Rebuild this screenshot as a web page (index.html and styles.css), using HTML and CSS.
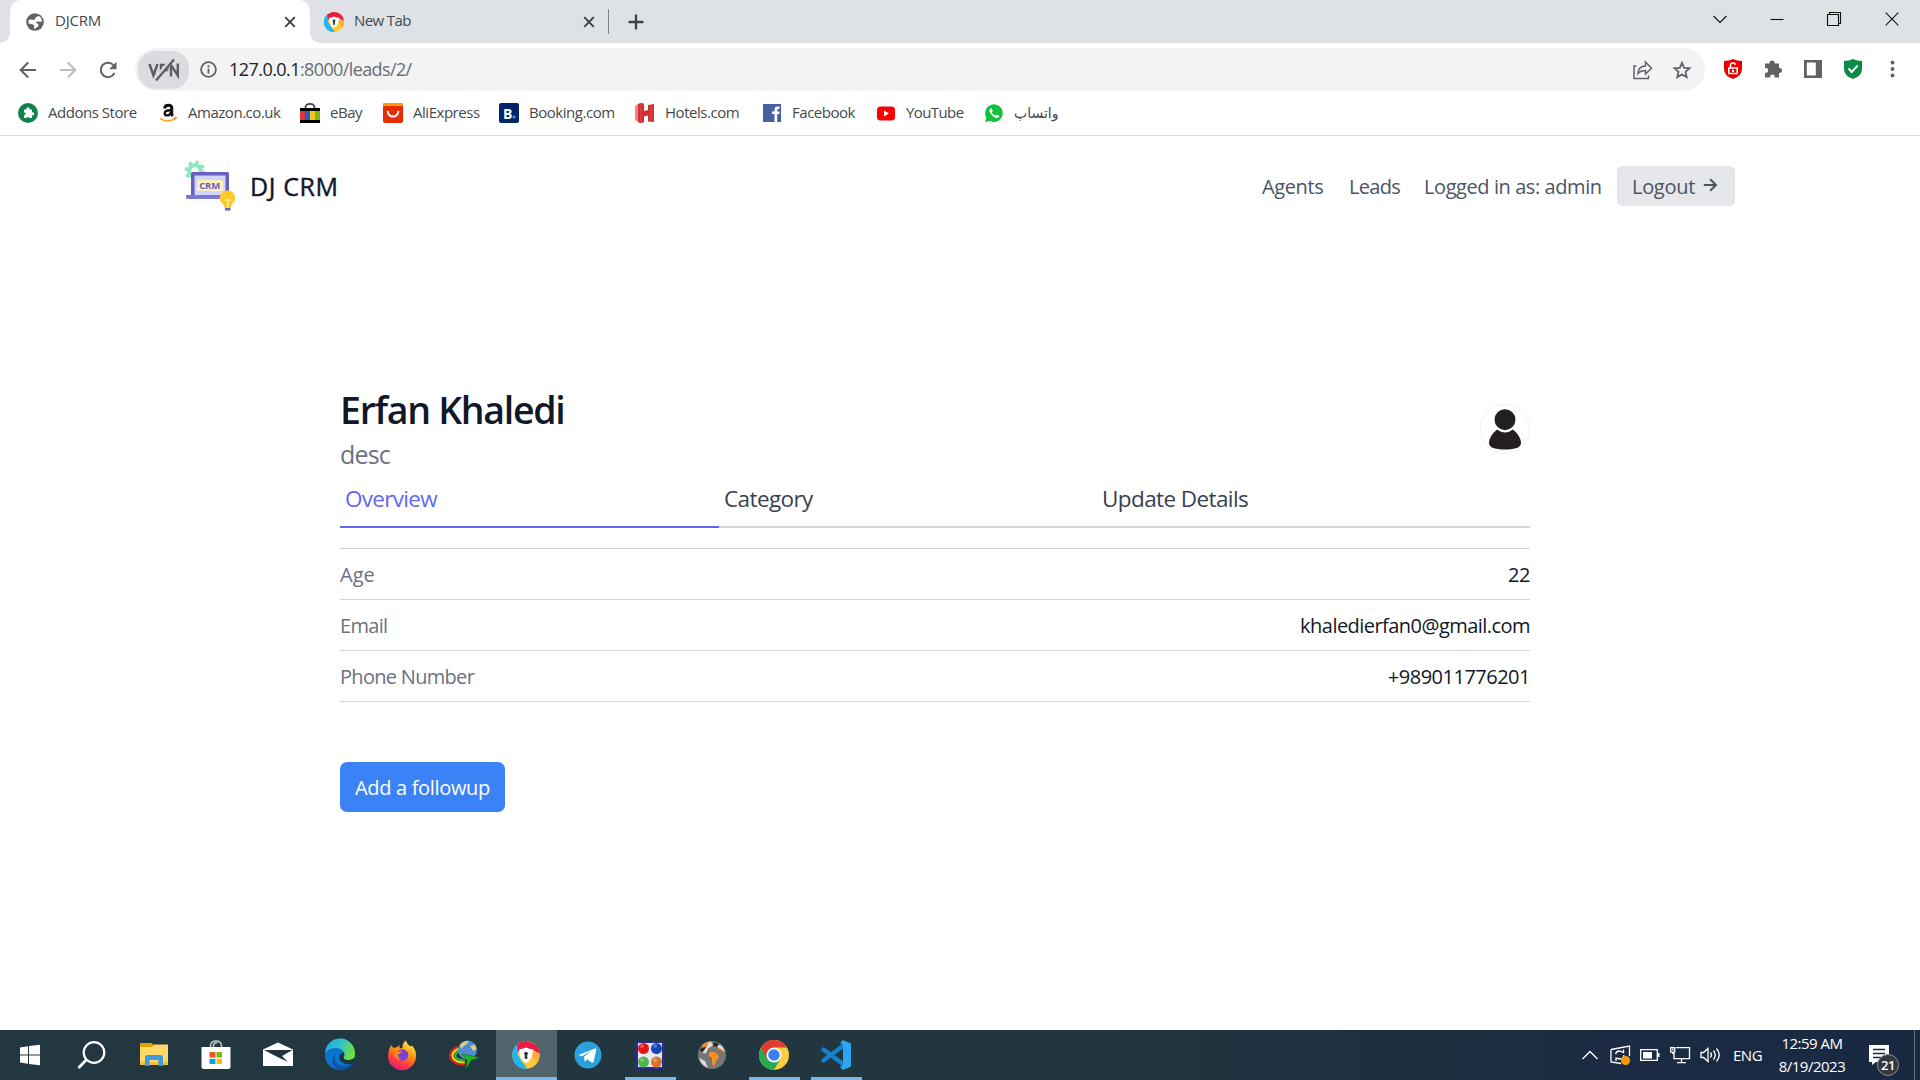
FILE: index.html
```html
<!DOCTYPE html>
<html lang="en">
<head>
<meta charset="utf-8">
<title>DJCRM</title>
<link rel="stylesheet" href="styles.css">
</head>
<body>
<div class="screen">
  <header class="browser">
    <div class="tabstrip">
      <div class="tab tab-active">
        <svg class="fav" viewBox="0 0 18 18"><circle cx="9" cy="9" r="8.800" fill="#5f6368"/><path d="M2.500 7.500Q4 6 5.500 6.500q2.500 1 3.500-.5 0-2 2.500-2.500l1-.8Q16 4.500 16 8q-1.500 1.500-3.500.500-2.500-.5-2.500 1.500 2.500 0 2.500 2 0 2-2 2.500L8.500 16Q8 16 8 14.500q1-2-1-3-2-.3-4.500-1z" fill="#fff"/></svg>
        <span class="tab-title t-djcrm">DJCRM</span>
        <svg class="x" viewBox="0 0 12 12"><path d="M1.200 1.200l9.600 9.600M10.800 1.200l-9.600 9.600"/></svg>
      </div>
      <div class="tab tab-second">
        <svg class="fav2" viewBox="0 0 20 20"><use href="#avast"/></svg>
        <span class="tab-title t-new">New Tab</span>
        <svg class="x" viewBox="0 0 12 12"><path d="M1.200 1.200l9.600 9.600M10.800 1.200l-9.600 9.600"/></svg>
      </div>
      <span class="tab-sep"></span>
      <svg class="plus" viewBox="0 0 16 16"><path d="M8 .5v15M.5 8h15"/></svg>
      <div class="winctl">
        <svg viewBox="0 0 14 14"><path d="M.5 4l6.500 6.500L13.500 4"/></svg>
        <svg viewBox="0 0 14 14"><path d="M.5 7.500h13"/></svg>
        <svg viewBox="0 0 14 14"><path d="M.5 2.500h11v11H.5zM2.500 2.500V.5h11v11h-2"/></svg>
        <svg viewBox="0 0 14 14"><path d="M.7 .7l12.600 12.600M13.300 .7L.7 13.300"/></svg>
      </div>
    </div>
    <div class="toolbar">
      <div class="navbtns">
        <svg viewBox="0 0 18 18"><path d="M17 9H2M9.200 1.500L1.700 9l7.500 7.500"/></svg>
        <svg class="dim" viewBox="0 0 18 18"><path d="M1 9h15M8.800 1.500L16.300 9l-7.500 7.500"/></svg>
        <svg viewBox="0 0 18 18"><path d="M15.500 12A7.200 7.200 0 1 1 14.600 4.400L16 6"/><path d="M17.500 .8v7.400h-7.400z" fill="#5f6368" stroke="none"/></svg>
      </div>
      <div class="omnibox">
        <div class="vpn"><svg viewBox="0 0 32 24"><g fill="none" stroke="#5b5e63" stroke-width="2.400"><path d="M1.500 6l4 11.500L9.500 6"/><path d="M13 17.500V7h4q3 .3 2.600 3.200t-4 3"/><path d="M23 18.500V7l6.800 10.500V5.500"/></g><path d="M7 22L24 2" stroke="#dadce0" stroke-width="5"/><path d="M8 22.500L26 1.500" stroke="#5b5e63" stroke-width="2.300"/></svg></div>
        <svg class="info" viewBox="0 0 17 17"><circle cx="8.500" cy="8.500" r="7.400" fill="none" stroke="#5f6368" stroke-width="1.800"/><path d="M8.500 7.500v5M8.500 4.200v2" stroke="#5f6368" stroke-width="1.900"/></svg>
        <span class="url"><b>127.0.0.1</b>:8000/leads/2/</span>
        <svg class="share" viewBox="0 0 20 20"><path d="M3.500 6H1v12.500h14.500V15.500M5 13.500c.3-5 3-7.500 7.500-7.500V2l6 6.200-6 5.800V10.500C9 10.500 7 11.200 5 13.500z" fill="none" stroke="#5f6368" stroke-width="1.500"/></svg>
        <svg class="star" viewBox="0 0 18 18"><path d="M9 1.800l2.200 5 5.400.5-4.100 3.600 1.200 5.300L9 13.400l-4.700 2.800 1.200-5.300L1.400 7.300l5.400-.5z" fill="none" stroke="#5f6368" stroke-width="1.800"/></svg>
      </div>
      <div class="ext">
        <svg viewBox="0 0 20 20"><path d="M10 0q4 2 9 2v8q0 7-9 10Q1 17 1 10V2q5 0 9-2z" fill="#e60000"/><path d="M5.800 9h8.400v5.500H5.800zM7.500 8.500V6.200q0-2.200 2.500-2.200 2.200 0 2.400 1.800" fill="none" stroke="#fff" stroke-width="1.500"/><path d="M9 10.800h2v2.200H9z" fill="#fff"/></svg>
        <svg viewBox="0 0 20 20"><path d="M2 4.500h4.500V4a2.600 2.600 0 0 1 5.200 0v.5H16V9h.6a2.500 2.500 0 0 1 0 5H16v4.500h-4.300v-.8a2.300 2.300 0 0 0-4.600 0v.8H2v-4.600h.8a2.400 2.400 0 0 0 0-4.800H2z" fill="#5f6368"/></svg>
        <svg viewBox="0 0 20 20"><path d="M1 1h18v18H1zM3.800 3.600v12.800h9V3.600z" fill="#5f6368" fill-rule="evenodd"/></svg>
        <svg viewBox="0 0 20 20"><path d="M10 0q4 2 9 2v8q0 7-9 10Q1 17 1 10V2q5 0 9-2z" fill="#0b8a4a"/><path d="M5.500 9.500l3.200 3.500 6-6.500" fill="none" stroke="#fff" stroke-width="1.900"/></svg>
        <svg viewBox="0 0 20 20"><g fill="#5f6368"><circle cx="9.500" cy="3.500" r="1.900"/><circle cx="9.500" cy="10" r="1.900"/><circle cx="9.500" cy="16.500" r="1.900"/></g></svg>
      </div>
    </div>
    <nav class="bookmarks">
      <a><svg viewBox="0 0 20 20"><circle cx="10" cy="10" r="10" fill="#12824c"/><path d="M6 6.500h2.500a1.600 1.600 0 1 1 3 0H14v2.800a1.600 1.600 0 1 1 0 3V15h-2.700a1.500 1.500 0 0 0-2.800 0H6v-2.700a1.500 1.500 0 0 0 0-3z" fill="#fff"/></svg><span>Addons Store</span></a>
      <a><svg viewBox="0 0 20 20"><path d="M6.500 5.500Q7 2.300 10.500 2.300q3.300 0 3.300 3.200v5.500q0 1 1 2" fill="none" stroke="#111" stroke-width="2.900"/><path d="M13 7.200q-6.300-.2-6.300 3 0 2.200 2.300 2.200 3.300 0 4-3.500" fill="none" stroke="#111" stroke-width="2.400"/><path d="M2 15.500q7.500 4.500 15 .2M15.500 14.600l2.500.2-1.200 2.400" fill="none" stroke="#f5a623" stroke-width="1.700"/></svg><span class="s-amz">Amazon.co.uk</span></a>
      <a><svg viewBox="0 0 20 20"><path d="M5.500 7V4Q6 .8 10 .8t4.500 3.200v3" fill="none" stroke="#444" stroke-width="1.700"/><path d="M0 5h20v15H0z" fill="#000"/><path d="M0 8h5v9H0z" fill="#e53238"/><path d="M5 8h5v9H5z" fill="#1a5fd0"/><path d="M10 8h5v9h-5z" fill="#f5c518"/><path d="M15 8h5v9h-5z" fill="#7cb518"/></svg><span>eBay</span></a>
      <a><svg viewBox="0 0 20 20"><rect width="20" height="20" rx="2" fill="#e62e04"/><path d="M0 3V2q0-2 2-2h16q2 0 2 2v1z" fill="#ff9900"/><path d="M4.500 8q1 5.500 5.500 5.500T15.500 8" fill="none" stroke="#fff" stroke-width="1.900"/></svg><span>AliExpress</span></a>
      <a><svg viewBox="0 0 20 20"><rect width="20" height="20" rx="2" fill="#04246a"/><text x="4" y="15.500" class="bk">B</text><circle cx="15" cy="14" r="1.500" fill="#1ba3e8"/></svg><span>Booking.com</span></a>
      <a><svg viewBox="0 0 20 20"><path d="M0 3l3-2v18l-3-2z" fill="#ef8585"/><path d="M3 1q4-2 6 0v7l4-1V2l6-1v18l-6-.5v-6l-4 1V19q-3 2-6 0z" fill="#d32f2f"/><path d="M6 1v18M16 2v17" stroke="#e04b4b"/></svg><span class="s-hot">Hotels.com</span></a>
      <a><svg viewBox="0 0 20 20"><path d="M1 1h18v18H1z" fill="#4560a0"/><path d="M12.500 19v-8H10V8.500h2.500V6.500q0-3 3-3h2V6h-1.300q-1 0-1 1v1.500h2.500L17.300 11h-2.100v8z" fill="#fff"/></svg><span>Facebook</span></a>
      <a><svg viewBox="0 0 20 20"><rect x="1" y="3.500" width="18" height="14" rx="3.500" fill="#f00"/><path d="M8 7.500v6l5-3z" fill="#fff"/></svg><span class="s-yt">YouTube</span></a>
      <a><svg viewBox="0 0 20 20"><path d="M1 19l1.300-4.500A8.800 8.800 0 1 1 6 18z" fill="#14c13c"/><path d="M6.500 5.500Q4.500 7 6.300 10q2 3.500 5.500 5 3 .5 3.700-2l-2.700-1.500-1.500 1.300Q9 11.800 7.800 9.500l1-1.200-1-2.700z" fill="#fff"/></svg><span class="ar">واتساپ</span></a>
    </nav>
  </header>

  <main class="page">
    <header class="site">
      <svg class="logo" viewBox="0 0 51 51">
        <g fill="#8ee8bd"><circle cx="10" cy="11" r="8"/><circle cx="10" cy="11" r="8.800" fill="none" stroke="#8ee8bd" stroke-width="3.200" stroke-dasharray="3.500 3.410"/></g><circle cx="10" cy="11" r="3.800" fill="#fff"/>
        <path d="M21 5h22M43 5v7M10 37v8M10 42h34" stroke="#dfe6f5" stroke-dasharray="1 3.200" fill="none"/>
        <rect x="6" y="12" width="38" height="25" rx="1.500" fill="#6a5fc0"/><path d="M9.500 15.500h31V35h-31z" fill="#cfd7ff"/><rect x="12" y="20" width="26" height="11" rx="2" fill="#fdf0b8"/>
        <text x="14.200" y="28.800" class="lg" textLength="21">CRM</text>
        <path d="M1 35h42v2.500q0 1.500-2 1.500H3q-2 0-2-1.500z" fill="#7d78d8"/>
        <path d="M42.500 30.500a7.300 7.300 0 0 1 4.800 13Q46 45.500 46 48h-6.500q0-2.500-2-4.500a7.300 7.300 0 0 1 5-13z" fill="#ffca28"/><path d="M40 40h5.500M42.700 40v8" stroke="#fff3c0" stroke-width="1.400"/><path d="M40 48h5.500v2.500H40z" fill="#6a5fc0"/>
      </svg>
      <span class="brand">DJ CRM</span>
      <nav class="sitenav">
        <a class="n1">Agents</a><a class="n2">Leads</a><a class="n3">Logged in as: admin</a>
      </nav>
      <a class="logout"><span>Logout</span><svg viewBox="0 0 14 14"><path d="M.8 7h12M7.200 1.200L13 7l-5.800 5.800"/></svg></a>
    </header>

    <section class="lead">
      <div class="lead-head">
        <div>
          <h1>Erfan Khaledi</h1>
          <h2>desc</h2>
        </div>
        <svg class="avatar" viewBox="0 0 50 50"><circle cx="25" cy="25" r="24.500" fill="#fff" stroke="#f1f1f1"/><path d="M17 25.500q8 6 16 0 7.800 6.500 8 13.500 0 6.500-16 6.500T9 39q.2-7 8-13.500z" fill="#231f20"/><circle cx="25" cy="15.700" r="11.200" fill="#231f20" stroke="#fff" stroke-width="1.500"/></svg>
      </div>
      <div class="tabs">
        <a class="on">Overview</a><a>Category</a><a class="last">Update Details</a>
      </div>
      <dl>
        <div><dt class="r1">Age</dt><dd>22</dd></div>
        <div><dt>Email</dt><dd class="v2">khaledierfan0@gmail.com</dd></div>
        <div><dt>Phone Number</dt><dd class="v3">+989011776201</dd></div>
      </dl>
      <a class="followup">Add a followup</a>
    </section>
  </main>

  <footer class="taskbar">
    <div class="apps">
      <div class="app"><svg viewBox="0 0 30 30"><path d="M5 7.500l8-1.200V14.500H5zM14 6.100L25 4.800V14.500H14zM5 15.500h8v8.300L5 22.600zM14 15.500h11v9.800L14 23.900z" fill="#fff"/></svg></div>
      <div class="app"><svg viewBox="0 0 30 30"><circle cx="17" cy="12.500" r="10.300" fill="none" stroke="#fff" stroke-width="2.200"/><path d="M9.500 19.500L1.500 28" stroke="#fff" stroke-width="2.800"/></svg></div>
      <div class="app"><svg viewBox="0 0 30 30"><path d="M1 3h12l2 3-2 3H1z" fill="#e0a100"/><path d="M1 7h12l2-2.500h14V25H1z" fill="#ffd868"/><path d="M1 22h28v3H1z" fill="#f5bf3c"/><path d="M6 26V17.500Q6 15 8.500 15h13q2.500 0 2.500 2.500V26h-4.500v-6h-9v6z" fill="#3f9be0"/></svg></div>
      <div class="app"><svg viewBox="0 0 30 30"><path d="M9.500 8V5.500Q10 1 15 1t5.500 4.500V8M12.500 8V5q.5-2.500 4-2.500" fill="none" stroke="#bcc5c8" stroke-width="1.500"/><path d="M.5 7h29v20q0 2-2 2h-25q-2 0-2-2z" fill="#fff"/><path d="M8.500 12h6v5.500h-6z" fill="#f25022"/><path d="M15.500 12h5.500v5.500h-5.500z" fill="#7fba00"/><path d="M8.500 18.800h6V24h-6z" fill="#00a4ef"/><path d="M15.500 18.800h5.500V24h-5.500z" fill="#ffb900"/></svg></div>
      <div class="app"><svg viewBox="0 0 30 30"><path d="M0 9.500L15 2.500l15 7V26H0z" fill="#fff"/><path d="M1 10h28.500l-10.500 6 6 6L12.500 16z" fill="#20343c"/></svg></div>
      <div class="app"><svg viewBox="0 0 30 30"><defs><linearGradient id="eg" x1="0" x2="1" y2=".3"><stop stop-color="#1f9fe0"/><stop offset=".6" stop-color="#35c6c5"/><stop offset="1" stop-color="#6bdf3c"/></linearGradient></defs><circle cx="15" cy="15" r="15" fill="#0b75d0"/><path d="M0 13A15 15 0 0 1 30 14q0 6-6.500 6-5 0-5-2.500l1-2.500Q19 9 12 8 4 7.500 0 13z" fill="url(#eg)"/><path d="M12 12q-4 5-.5 10.500t16.500 1.500A15 15 0 0 1 13 29.800Q2 22 12 12z" fill="#0c56a4"/><path d="M19 12.500q1 2.500-.5 5 .5 3 6 2.500 3-.3 5.300-2.500-1.500 5-2.500 6.500-7 1-10.500-2t-2-7q1.500-3 4.200-2.500z" fill="#20343c"/></svg></div>
      <div class="app"><svg viewBox="0 0 30 30"><defs><linearGradient id="ff" x1=".8" y1="0" x2=".3" y2="1"><stop stop-color="#fff44f"/><stop offset=".4" stop-color="#ff980e"/><stop offset=".75" stop-color="#ff3647"/><stop offset="1" stop-color="#e31587"/></linearGradient></defs><path d="M4 5l2.500 3 4-1 2-2v3.500l3-.5Q15 3 19 .500q1 4 5 6l1-1q4.500 5 4 11A14 14 0 0 1 1 16Q1 10 4 5z" fill="url(#ff)"/><circle cx="15.500" cy="15" r="5.800" fill="#7b3fd6"/><path d="M7 11q4 1 8 0-1 3-4 3.500-.5 3 3 5-6 0-7-4.500z" fill="#ff8a16"/></svg></div>
      <div class="app"><svg viewBox="0 0 30 30"><g fill="none" stroke-width="2.200"><path d="M9 6.500Q-1 11 1.500 18T16 24.500" stroke="#d81e1e"/><path d="M10 8.500Q1.500 12.500 3.800 17.500t12 5" stroke="#f6d51f"/><path d="M10 11q-5 3-3.500 6t9.500 3.500" stroke="#36b12d"/></g><circle cx="18.500" cy="10" r="9.500" fill="#4f8ad6"/><path d="M11 4.500q4-4 9-3.800l-2 3.300-3 2-3 3zM21 6l5-1.500 1.500 4-3 3z" fill="#d8cf76"/><path d="M13 14l17 3.500-8 3-5 8.500 1-9z" fill="#1fb51b" stroke="#087208" stroke-width=".6"/></svg></div>
      <div class="app focus"><svg viewBox="-1 -1 22 22"><g id="avast"><circle cx="10" cy="10" r="10" fill="#ffc93c"/><path d="M10 0Q3 1 2 7l3 5 4 8A10 10 0 0 1 3.500 2.500z" fill="#1fb6f5"/><path d="M0 10A10 10 0 0 0 11 20L7 15 4 10 4 2Q0 5 0 10z" fill="#1fb6f5"/><path d="M3.500 2.500A10 10 0 0 1 20 9l-6-3-6 0q-3 .3-4 2z" fill="#ec1846"/><path d="M14 5.500L20 9q.3 4-2 7l-3-5z" fill="#ffab40"/><path d="M10 4.500q2.500 1.300 5 1.300Q15.300 13 10 16 4.700 13 5 5.800q2.500 0 5-1.300z" fill="#fff"/><circle cx="10" cy="9" r="1.400" fill="#333"/><path d="M9.300 9.500h1.400l.4 3.200H8.900z" fill="#333"/></g></svg></div>
      <div class="app"><svg viewBox="0 0 30 30"><circle cx="15" cy="15" r="13.500" fill="#2ba0da"/><path d="M5.500 15L22 8.500q1.500-.3 1.300 1.200L20.500 22q-.5 1.300-1.800.5l-4.500-3.300-2.500 2.500-.8-5 8.500-6.500-10.500 6z" fill="#fff"/></svg></div>
      <div class="app run"><svg viewBox="0 0 30 30"><rect x="1" y="1" width="28" height="28" rx="2" fill="#2a2a9a"/><path d="M3 3h24v24H3z" fill="#e8e8ee"/><circle cx="8.500" cy="8.500" r="5.500" fill="#e01818"/><circle cx="21.500" cy="8.500" r="5.500" fill="#1546b8"/><circle cx="8.500" cy="22" r="5.500" fill="#4fb54f"/><circle cx="21.500" cy="22" r="5.500" fill="#d9762e"/><g fill="#fff" opacity=".25"><circle cx="7" cy="6" r="2"/><circle cx="20" cy="6" r="2"/><circle cx="7" cy="20" r="2"/><circle cx="20" cy="20" r="2"/></g></svg></div>
      <div class="app"><svg viewBox="0 0 30 30"><circle cx="15" cy="15" r="14" fill="#777"/><path d="M4 8Q8 2 14 1.500l2 4-5 3-2 5-5-1zM18 3l7 3 3 6-6-3zM2 18l6 3 3 7Q4 25 2 18z" fill="#ddd"/><path d="M3 10q3-6 8-6l-3 5-3 4zM17 2l5 2-2 3-4-1z" fill="#2d2925"/><path d="M5 5q3-3 7-3l-2 4-4 2zM12 13q4-3 8 1l2 3-3 4-2 6-2-4v-5l-3-2z" fill="#f5921e"/><path d="M20 8l4 1 2 3-3 1z" fill="#c8671a"/></svg></div>
      <div class="app run"><svg viewBox="0 0 30 30"><circle cx="15" cy="15" r="15" fill="#ffcd40"/><path d="M15 15L2 7.500A15 15 0 0 0 15 30l6.500-11.300z" fill="#2da94f"/><path d="M2 7.500A15 15 0 0 1 28 7.500H15L8.500 18.700z" fill="#e33b2e"/><circle cx="15" cy="15" r="7.500" fill="#fff"/><circle cx="15" cy="15" r="5.800" fill="#3b82f0"/></svg></div>
      <div class="app run"><svg viewBox="0 0 30 30"><path d="M2.500 9.500L24 25.500M2.500 20.500L24 4.500" stroke="#1681cc" stroke-width="4.300" stroke-linecap="round"/><path d="M22 0l8 3.500v23L22 30l-3-3 3-2V5l-3-2z" fill="#2aa7f0"/></svg></div>
    </div>
    <div class="tray">
      <svg class="i-up" viewBox="0 0 16 20"><path d="M.5 14L8 6.500 15.500 14"/></svg>
      <svg class="i-upd" viewBox="0 0 20 20"><path d="M1 4.500L19.500 1v10M1 4.500V17l10 1.500"/><path d="M5.500 9q1-3 4-3l4 1.500V4.500M14 10q-.5 4-4 4l-4-1v3"/><circle cx="15.500" cy="15.500" r="4.600" fill="#ff9800" stroke="none"/></svg>
      <svg class="i-bat" viewBox="0 0 20 20"><path d="M.7 4.700h16.600v10.600H.7z"/><path d="M18.500 8v4" stroke-width="2"/><path d="M3 7h9v6.500H3z" fill="#fff" stroke="none"/></svg>
      <svg class="i-net" viewBox="0 0 20 20"><path d="M6 2.700h13.500v11H4V8M11.500 14v3.500M7 17.700h9M.7 2.700h4v4.500h-4zM2.700 7v2M2 4.500h1.500"/></svg>
      <svg class="i-vol" viewBox="0 0 20 20"><path d="M1 7.500h2.500L8 3.500v13L3.500 12.500H1zM10.500 7.500q2 2.500 0 5M13.500 5.500q3.500 4.500 0 9M16.500 3.500q5.500 6.500 0 13"/></svg>
      <span class="lang">ENG</span>
      <div class="clock"><span>12:59 AM</span><span class="date">8/19/2023</span></div>
      <div class="notif"><svg viewBox="0 0 20 20"><path d="M0 0h20v17H7l-4 3v-3H0z" fill="#fff"/><path d="M4 4.500h12M4 8.500h12M4 12.500h8" stroke="#1b2b42" stroke-width="1.300"/></svg><span class="badge">21</span></div>
      <span class="peek"></span>
    </div>
  </footer>
</div>
</body>
</html>
```
FILE: styles.css
```css
* { box-sizing: border-box; }
body { margin: 0; background: #fff; font-family: "Open Sans", "Noto Sans", sans-serif; overflow: hidden; }
h1, h2, dl, dd { margin: 0; }
svg { display: block; flex: none; overflow: visible; }
.screen { width: 1920px; height: 1080px; display: flex; flex-direction: column; white-space: nowrap; }
.browser { height: 136px; border-bottom: 1px solid #d8dadd; }

.tabstrip { height: 43px; background: #dee1e6; display: flex; align-items: center; padding-left: 10px; }
.tab { height: 43px; display: flex; align-items: center; }
.tab-active { width: 300px; background: #fff; border-radius: 10px 10px 0 0; padding: 0 14px 0 16px; position: relative; }
.tab-active::before, .tab-active::after { content: ""; position: absolute; bottom: 0; width: 10px; height: 10px; }
.tab-active::before { left: -10px; background: radial-gradient(circle at 0 0, #dee1e6 9.5px, #fff 10px); }
.tab-active::after { right: -10px; background: radial-gradient(circle at 100% 0, #dee1e6 9.5px, #fff 10px); }
.tab-second { width: 299px; padding: 0 14px; }
.fav { width: 18px; height: 18px; margin-right: 11px; }
.fav2 { width: 20px; height: 20px; margin-right: 10px; }
.tab-title { flex: 1; font-size: 15px; line-height: 20px; padding-bottom: 3px; color: #45494d; letter-spacing: -.6px; }
.t-djcrm { letter-spacing: -.2px; }
.x { width: 12px; height: 12px; stroke: #3c4043; stroke-width: 1.9; }
.tab-sep { width: 1px; height: 25px; margin-left: -1px; background: #808388; }
.plus { width: 16px; height: 16px; margin-left: 19px; stroke: #3c4043; stroke-width: 2.3; }
.winctl { margin-left: auto; display: flex; gap: 43.300px; padding: 0 21.500px 6px 0; }
.winctl svg { width: 14px; height: 14px; fill: none; stroke: #111; stroke-width: 1.1; }

.toolbar { height: 53px; display: flex; align-items: center; padding-left: 18px; }
.navbtns { display: flex; gap: 22px; width: 117px; padding-left: .5px; }
.navbtns svg { width: 18px; height: 18px; fill: none; stroke: #5f6368; stroke-width: 2; }
.navbtns .dim { stroke: #babcbe; }
.omnibox { width: 1570px; height: 43px; border-radius: 22px; background: #f1f3f4; display: flex; align-items: center; padding-left: 3px; }
.vpn { width: 51px; height: 38px; border-radius: 17px; background: #dadce0; display: grid; place-items: center; }
.vpn svg { width: 32px; height: 24px; }
.info { width: 17px; height: 17px; margin: 0 12px 0 11px; }
.url { font-size: 18px; line-height: 24px; padding-bottom: 1px; letter-spacing: -.62px; color: #6a6e73; flex: 1; }
.url b { font-weight: 400; color: #202124; letter-spacing: -.55px; }
.share { width: 20px; height: 20px; margin-right: 20px; }
.star { width: 18px; height: 18px; margin-right: 14px; }
.ext { display: flex; gap: 20.200px; margin-left: 17.500px; padding-bottom: 2px; }
.ext svg { width: 20px; height: 20px; }

.bookmarks { height: 34px; padding-left: 18px; display: grid; grid-template-columns: 140px 142px 83px 116px 136px 127px 114px 108px 90px; align-items: center; }
.bookmarks a { display: flex; align-items: center; gap: 10px; }
.bookmarks svg { width: 20px; height: 20px; }
.bookmarks span { font-size: 15px; line-height: 20px; padding-bottom: 2px; color: #45494d; letter-spacing: -.47px; }
.bookmarks .s-yt { letter-spacing: -.6px; }
.bk { font: 700 14px "Open Sans", sans-serif; fill: #fff; }
.bookmarks .ar { font-family: "DejaVu Sans", sans-serif; font-size: 14px; letter-spacing: 0; padding: 0; }

.page { height: 894px; }
.site { height: 100px; padding: 0 185px 1px; display: flex; align-items: center; }
.logo { width: 51px; height: 51px; }
.lg { font: 700 9.500px "Open Sans", sans-serif; fill: #6a5fc0; }
.brand { margin-left: 14px; padding-top: 1px; font-size: 25px; font-weight: 500; color: #111827; letter-spacing: .6px; -webkit-text-stroke: .4px #111827; }
.sitenav { margin-left: auto; padding-top: 1px; display: flex; color: #4b5563; font-size: 20px; }
.n1 { width: 87px; letter-spacing: -.4px; }
.n2 { width: 75px; letter-spacing: -.7px; }
.n3 { width: 193px; letter-spacing: -.42px; }
.logout { width: 118px; height: 40px; background: #e5e7eb; border-radius: 5px; display: flex; align-items: center; justify-content: space-between; padding: 0 18px 1px 15px; font-size: 20px; color: #4b5563; letter-spacing: -.3px; }
.logout span { padding-top: 2px; }
.logout svg { width: 14px; height: 14px; fill: none; stroke: #4b5563; stroke-width: 2; }

.lead { width: 1190px; margin: 149px 0 0 340px; }
.lead-head { display: flex; justify-content: space-between; align-items: center; height: 94px; padding-bottom: 7px; }
h1 { font-size: 37.500px; line-height: 50px; font-weight: 600; color: #111827; letter-spacing: -1.3px; }
h2 { font-size: 25px; line-height: 38px; font-weight: 400; color: #6b7280; letter-spacing: -.8px; }
.avatar { width: 50px; height: 50px; }
.tabs { display: flex; height: 50px; font-size: 22.500px; color: #374151; }
.tabs a { width: 378px; height: 49px; padding-left: 5px; line-height: 39px; border-bottom: 2px solid #d1d5db; letter-spacing: -.6px; }
.tabs .on { color: #6366f1; border-color: #6366f1; width: 379px; letter-spacing: -.7px; }
.tabs .last { flex: 1; }
dl { margin-top: 19px; border-top: 1px solid #d1d5db; font-size: 20px; }
dl div { height: 51px; display: flex; justify-content: space-between; align-items: center; border-bottom: 1px solid #d1d5db; letter-spacing: -.4px; }
dt { color: #6b7280; letter-spacing: -.7px; }
.r1 { letter-spacing: 0; }
dd { color: #111827; }
.v2 { letter-spacing: -.54px; }
.v3 { letter-spacing: -.5px; }
.followup { margin-top: 60px; width: 165px; height: 50px; border-radius: 7px; background: #3b82f6; color: #fff; display: flex; align-items: center; justify-content: center; font-size: 20px; letter-spacing: -.33px; }

.taskbar { height: 50px; display: flex; justify-content: space-between; background: linear-gradient(90deg, #22373f 0, #21363f 55%, #1d2f3f 75%, #1b2b42 82%, #1a2942 100%); }
.apps { display: flex; margin-left: -1px; }
.app { width: 62px; height: 50px; display: grid; place-items: center; }
.app svg { width: 30px; height: 30px; }
.run { background: linear-gradient(#76b9ed, #76b9ed) 6px 100% / 51px 3px no-repeat; }
.focus { background: linear-gradient(#76b9ed, #76b9ed) 1px 100% / 61px 3px no-repeat, linear-gradient(#51646b, #51646b) 1px 0 / 61px 50px no-repeat; }
.tray { display: flex; align-items: center; color: #fff; }
.tray > svg { width: 20px; height: 20px; fill: none; stroke: #fff; stroke-width: 1.3; margin-right: 10px; }
.tray .i-up { width: 16px; margin-right: 12px; }
.lang { font-size: 15px; letter-spacing: -.5px; width: 41px; margin-left: 3px; }
.clock { width: 76px; font-size: 15px; line-height: 23px; display: flex; flex-direction: column; align-items: center; letter-spacing: -.5px; }
.notif { position: relative; width: 20px; height: 20px; margin: 0 25px 0 19px; }
.notif svg { width: 20px; height: 20px; }
.badge { position: absolute; left: 8px; top: 9px; width: 22px; height: 22px; border-radius: 50%; background: #343840; border: 1px solid #8a8d92; font-size: 13px; font-weight: 600; line-height: 20px; text-align: center; letter-spacing: -.5px; }
.peek { width: 1px; height: 50px; background: #6a7382; margin-right: 5px; }
```
